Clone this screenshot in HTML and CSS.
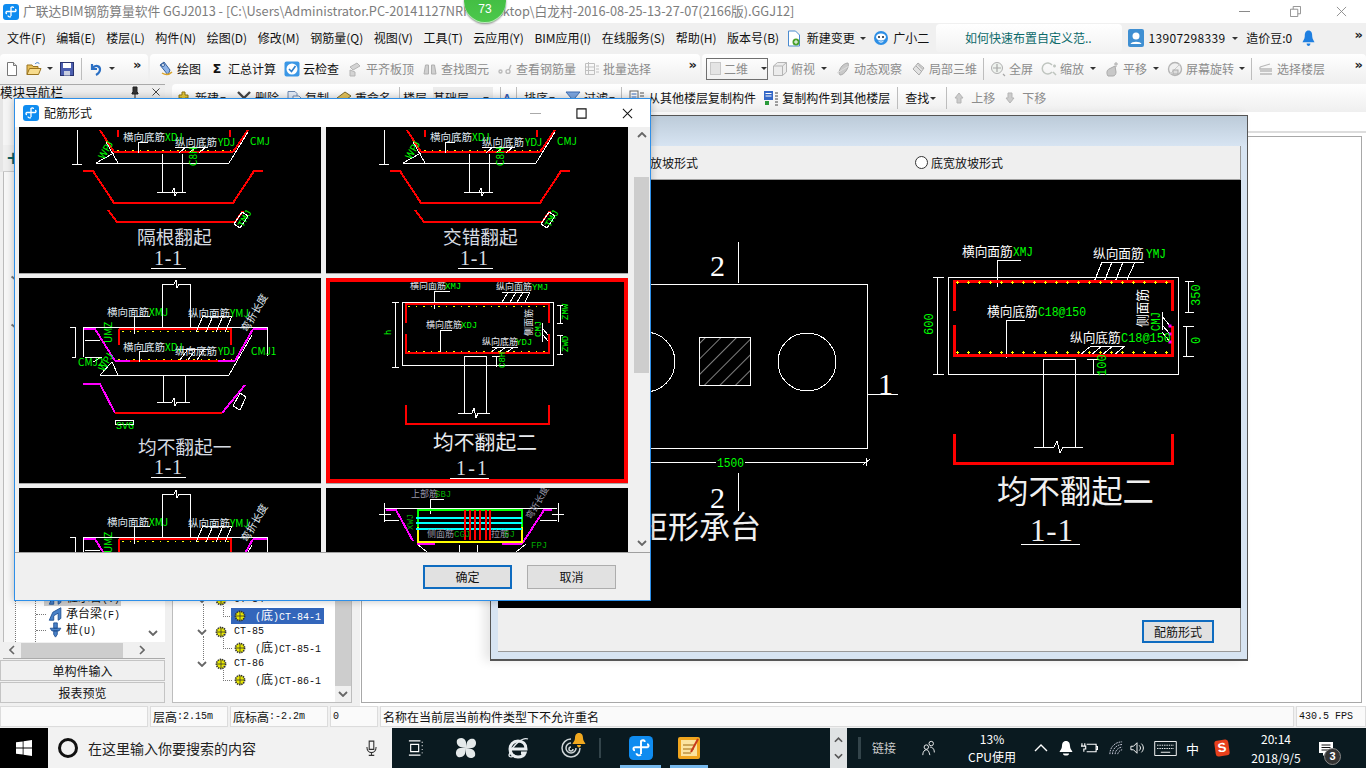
FILE: index.html
```html
<!DOCTYPE html>
<html lang="zh-CN">
<head>
<meta charset="utf-8">
<title>广联达BIM钢筋算量软件</title>
<link rel="stylesheet" href="styles.css">
</head>
<body>
<svg class="defs" width="0" height="0">
  <defs>
    <symbol id="i-logo" viewBox="0 0 16 16"><rect width="16" height="16" rx="3" fill="#0f8cf0"/><path d="M8 3v9M3.5 7.5h9M8 12.5c-1.5 1-3 0-3-1M8 3.5c1-1 2.500-.8 2.500.5M12.500 7.500c.8-.8.8-2-.5-2M3.500 7.500c-.8.8-.8 2 .5 2" fill="none" stroke="#fff" stroke-width="1.300"/></symbol>
    <symbol id="i-new" viewBox="0 0 16 16"><path d="M3.500 1.500h6l3 3v10h-9z" fill="#fff" stroke="#777"/><path d="M9.500 1.500v3h3" fill="#ddd" stroke="#777"/></symbol>
    <symbol id="i-open" viewBox="0 0 16 16"><path d="M1 4h5l1 1.500h5v8H1z" fill="#e8bf5a" stroke="#9a7420"/><path d="M3.500 7.500H15L12.500 13.500H1z" fill="#f7dc8e" stroke="#9a7420"/><path d="M9 3c2-2 3.500-1.500 4.500 0" fill="none" stroke="#3a7bc8"/></symbol>
    <symbol id="i-save" viewBox="0 0 16 16"><rect x="1.500" y="1.500" width="13" height="13" fill="#4c5fb0" stroke="#28336f"/><rect x="4" y="2" width="8" height="5" fill="#fff"/><rect x="5" y="10" width="6" height="4.500" fill="#c9cfe0"/></symbol>
    <symbol id="i-undo" viewBox="0 0 16 16"><path d="M4 3v5h5M4.500 7.500C7 3.500 12.500 4.500 12 9c-.3 2.500-2 4-4 5" fill="none" stroke="#2a6fc4" stroke-width="2.200"/></symbol>
    <symbol id="i-draw" viewBox="0 0 16 16"><path d="M2 4l4-3 6 8-2 5z" fill="#8fb4e8" stroke="#35609c"/><path d="M4 12c3 2 7 2 10-1" fill="none" stroke="#d9a227" stroke-width="1.500"/><circle cx="5" cy="4" r="1.500" fill="#fff" stroke="#35609c"/></symbol>
    <symbol id="i-cloud" viewBox="0 0 16 16"><rect x=".5" y=".5" width="15" height="15" rx="2" fill="#3a97e6"/><circle cx="8" cy="8" r="5.500" fill="#fff"/><path d="M5 8l2.500 2.500L11.500 5" fill="none" stroke="#2a7dca" stroke-width="1.600"/></symbol>
    <symbol id="i-flush" viewBox="0 0 16 16"><path d="M3 6l7-4 3 3-7 4zM3 9l5 2v4H3z" fill="#d4d4d4" stroke="#b5b5b5"/></symbol>
    <symbol id="i-bino" viewBox="0 0 16 16"><path d="M2 13l1.500-9h3v9zM9.500 13V4h3l1.500 9z" fill="#d0d0d0" stroke="#b0b0b0"/></symbol>
    <symbol id="i-glass" viewBox="0 0 16 16"><path d="M2 10.500c0-2 3-2 3 0s-3 2-3 0zM9 10.500c0-2.500 4-2.500 4 0s-4 2.500-4 0zM12 9l2-5" fill="none" stroke="#bbb" stroke-width="1.400"/></symbol>
    <symbol id="i-batch" viewBox="0 0 16 16"><path d="M1.500 2.500h9v11h-9zM4.500 1v13M1.500 6h9M1.500 9.500h9M12 5h3M12 8h3M12 11h3" fill="none" stroke="#c0c0c0"/></symbol>
    <symbol id="i-cube" viewBox="0 0 16 16"><path d="M1.500 5l4-3.500h9V11l-4 3.500h-9zM1.500 5h9v9.500M10.500 5l4-3.500" fill="#ececec" stroke="#b5b5b5"/></symbol>
    <symbol id="i-orbit" viewBox="0 0 16 16"><path d="M5 14C2 11 7 2 13 2c2 3-3 12-8 12z" fill="#c9c9c9" stroke="#aaa"/><path d="M2 12L14 5" stroke="#ddd"/></symbol>
    <symbol id="i-local" viewBox="0 0 16 16"><path d="M3 8l5-6 6 5-5 7zM6 5l5 5M8 3.500L12.500 8" fill="#e2e2e2" stroke="#aaa"/></symbol>
    <symbol id="i-full" viewBox="0 0 16 16"><circle cx="7" cy="7" r="5.500" fill="#eef2ee" stroke="#b0b0b0"/><path d="M7 3v8M3 7h8M13 13l2 2" stroke="#a8a8a8" fill="none" stroke-width="1.200"/></symbol>
    <symbol id="i-zoom" viewBox="0 0 16 16"><path d="M11 4A5.500 5.500 0 1 0 11 11M12 11l3 3M12 5h3M13.500 3.500v3" fill="none" stroke="#bfc5bf" stroke-width="1.500"/></symbol>
    <symbol id="i-pan" viewBox="0 0 16 16"><path d="M4 15c-2-3-1-6 1-7l6-3 1 6c0 2-1 4-3 4z" fill="#c8c8c8" stroke="#aaa"/><path d="M12 1v5M10 3h4" stroke="#aaa" fill="none"/></symbol>
    <symbol id="i-rotate" viewBox="0 0 16 16"><circle cx="8" cy="8" r="6.500" fill="#f0f0f0" stroke="#b5b5b5" stroke-width="1.400"/><path d="M3 13L13 3" stroke="#ccc"/><rect x="6" y="9" width="5" height="4" fill="#ddd" stroke="#aaa"/></symbol>
    <symbol id="i-floor" viewBox="0 0 16 16"><path d="M2 6l10-3M2 6v2h12M2 10h12M2 13h12" fill="none" stroke="#b9b9b9" stroke-width="1.300"/></symbol>
    <symbol id="i-add" viewBox="0 0 16 16"><path d="M3 5h3V2h3v3h3v3H9v3H6V8H3z" fill="#e6c83a" stroke="#8a7411"/><rect x="6" y="11" width="9" height="2" fill="#3a6fc4"/></symbol>
    <symbol id="i-del" viewBox="0 0 16 16"><path d="M2 2l12 12M14 2L2 14" stroke="#444" stroke-width="2.400"/></symbol>
    <symbol id="i-copy" viewBox="0 0 16 16"><path d="M2 1.500h7l2 2v9H2z" fill="#e5ecf7" stroke="#6f88ae"/><path d="M7 6h6l2 2v7H7z" fill="#fff" stroke="#6f88ae"/></symbol>
    <symbol id="i-rename" viewBox="0 0 16 16"><path d="M1 8l8-6 6 4-8 6z" fill="#e4c25a" stroke="#7a6a2a"/><path d="M4 13h10" stroke="#8a8a8a" stroke-width="1.500"/></symbol>
    <symbol id="i-filter" viewBox="0 0 16 16"><path d="M1 2h14L9.500 8.500V14l-3-2V8.500z" fill="#7da6e0" stroke="#3e6db0"/></symbol>
    <symbol id="i-from" viewBox="0 0 16 16"><rect x="1" y="1" width="8" height="13" fill="#fff" stroke="#666"/><path d="M2.500 4h5M2.500 7h5M2.500 10h5" stroke="#3468b8"/><path d="M11 3h4M11 6h4M11 9h4M11 12h4" stroke="#555"/></symbol>
    <symbol id="i-to" viewBox="0 0 16 16"><rect x="1" y="1" width="9" height="9" fill="#3468c8"/><path d="M2.500 3.500h6M2.500 6h6" stroke="#fff"/><rect x="2" y="11" width="4" height="4" fill="#2a9a3a"/><path d="M12 3h3M12 6h3M12 9h3M12 12h3M12 15h3" stroke="#444"/></symbol>
    <symbol id="i-up" viewBox="0 0 10 12"><path d="M5 1l4 5H7v5H3V6H1z" fill="#ccc" stroke="#b5b5b5"/></symbol>
    <symbol id="i-down" viewBox="0 0 10 12"><path d="M5 11L1 6h2V1h4v5h2z" fill="#ccc" stroke="#b5b5b5"/></symbol>
    <symbol id="i-doc" viewBox="0 0 14 17"><path d="M1.500 1h7l4 4v11h-11z" fill="#fff" stroke="#4a8bd0"/><circle cx="9" cy="12" r="3.500" fill="#4aa02c"/><path d="M7 12h4M9 10v4" stroke="#fff"/></symbol>
    <symbol id="i-bot" viewBox="0 0 16 16"><circle cx="8" cy="8" r="7" fill="#2d8fe6"/><ellipse cx="8" cy="7" rx="5" ry="3.500" fill="#fff"/><circle cx="6" cy="7" r="1" fill="#123"/><circle cx="10" cy="7" r="1" fill="#123"/><path d="M5.500 11c1.500 1.500 3.500 1.500 5 0" stroke="#fff" fill="none"/></symbol>
    <symbol id="i-user" viewBox="0 0 16 18"><rect width="16" height="18" rx="2" fill="#3f8fd2"/><circle cx="8" cy="7" r="3.500" fill="#fff"/><path d="M2.500 15c1-3 10-3 11 0z" fill="#fff"/></symbol>
    <symbol id="i-bell" viewBox="0 0 14 18"><path d="M7 1c3 0 4 2.500 4 6 0 3 2 5 2.500 6.500H.500C1 12 3 10 3 7c0-3.500 1-6 4-6z" fill="#1f7fe0"/><path d="M5 15h4c0 1.500-.8 2.500-2 2.500S5 16.500 5 15z" fill="#1f7fe0"/></symbol>
    <symbol id="i-gear" viewBox="0 0 12 12"><circle cx="6" cy="6" r="4.600" fill="#e8e800" stroke="#333" stroke-dasharray="1.400 .8" stroke-width="1.600"/><path d="M1.500 6h9M6 1.500v9" stroke="#333" stroke-width=".8"/></symbol>
    <symbol id="i-beam" viewBox="0 0 16 18"><path d="M1 16l4-9 9-5v12l-3 2V8L6 11v5z" fill="#4a82c8" stroke="#1e4f90"/></symbol>
    <symbol id="i-pile" viewBox="0 0 14 18"><path d="M1 7h12l-2 3H3zM5 1h4v6H5zM5 10h4v4l-2 3-2-3z" fill="#4a82c8" stroke="#1e4f90"/></symbol>
    <symbol id="i-chev" viewBox="0 0 10 6"><path d="M1 1l4 4 4-4" fill="none" stroke="#666" stroke-width="1.800"/></symbol>

    <symbol id="trap" viewBox="0 0 1366 768" overflow="visible">
      <path d="M162 327V284H174l2-4 1 8 2-4H190V327M83 327H267M83 327V357M267 327V356M100 375H229L252 335M100 375L112 362L118 375" class="w" />
      <path d="M119 329H231V345M119 329V345" class="r"/>
      <path d="M122 331H229M118 359H232" class="ds"/>
      <path d="M84 329H95L115 361M253 329H267M253 329L235 361" class="m"/>
      <path d="M115 361H235" class="r"/>
      <path d="M115 361H130M218 361H235" class="m"/>
      <path d="M134 316H150M134 316V334M203 316H232M203 316L196 332M213 316L206 332M223 316L216 332M232 316L225 332" class="w"/>
      <path d="M139 351V362M139 351H148M188 349L180 360M210 349H178M196 349L188 360M204 349L197 360M75 327V357H72M75 327H70M85 340H100M85 357H102L93 362" class="w"/>
      <text x="107" y="316" class="tw">横向面筋</text><text x="149" y="316" class="tg">XMJ</text>
      <text x="188" y="317" class="tw">纵向面筋</text><text x="230" y="317" class="tg">YMJ</text>
      <text x="123" y="351" class="tw">横向底筋</text><text x="165" y="351" class="tg">XDJ</text>
      <text x="175" y="355" class="tw">纵向底筋</text><text x="218" y="355" class="tg">YDJ</text>
      <text x="78" y="366" class="tg">CMJ2</text><text x="251" y="355" class="tg">CMJ1</text>
      <text transform="translate(112 343) rotate(-90)" class="tg">UMZ</text>
      <text transform="translate(104 372) rotate(-60)" class="tg">WPJ</text>
      <text transform="translate(247 333) rotate(-60)" class="tw">弯折长度</text>
    </symbol>

    <symbol id="topc" viewBox="0 0 1366 768" overflow="visible">
      <path d="M114 152H233M100 130L114 152M233 152L248 130M118 130V137M230 130V137" class="r"/>
      <path d="M117 150H231" class="ds"/>
      <path d="M77 130V164M72 164H82M96 163H229L248 132M114 153L96 163M162 154V192H182V154M157 192H172l2-4 1 8 2-4H186M138 153V142H148M175 147H208M186 147L179 153M196 147L189 153M206 147L199 153M106 142L118 163" class="w"/>
      <text x="123" y="141" class="tw">横向底筋</text><text x="165" y="141" class="tg">XDJ</text>
      <text x="175" y="146" class="tw">纵向底筋</text><text x="218" y="146" class="tg">YDJ</text>
      <text x="250" y="145" class="tg">CMJ</text>
      <text transform="translate(104 160) rotate(-60)" class="tg">WPJ</text>
      <text transform="translate(197 166) rotate(-90)" class="tg">C8H</text>
    </symbol>
  </defs>
</svg>

<div class="app">
  <header class="titlebar">
    <svg class="ico16"><use href="#i-logo"/></svg>
    <span class="title-text">广联达BIM钢筋算量软件 GGJ2013 - [C:\Users\Administrator.PC-20141127NRHI\Desktop\白龙村-2016-08-25-13-27-07(2166版).GGJ12]</span>
    <div class="win-btns">
      <span class="wb-min"></span>
      <svg class="wb wb-max" viewBox="0 0 12 12"><path d="M.5 3.500h8v8h-8zM3.500 3.500v-3h8v8h-3" fill="none" stroke="#8a8a8a"/></svg>
      <svg class="wb" viewBox="0 0 12 12"><path d="M1 1l10 10M11 1L1 11" stroke="#8a8a8a"/></svg>
    </div>
  </header>

  <nav class="menubar">
    <span>文件(F)</span><span>编辑(E)</span><span>楼层(L)</span><span>构件(N)</span><span>绘图(D)</span><span>修改(M)</span><span>钢筋量(Q)</span><span>视图(V)</span><span>工具(T)</span><span>云应用(Y)</span><span>BIM应用(I)</span><span>在线服务(S)</span><span>帮助(H)</span><span>版本号(B)</span>
    <span class="menu-ti menu-doc"><svg class="ico-doc"><use href="#i-doc"/></svg>新建变更<i class="caret"></i></span>
    <span class="menu-ti menu-bot"><svg class="ico16"><use href="#i-bot"/></svg>广小二</span>
    <span class="menu-tip">如何快速布置自定义范..</span>
    <span class="menu-ti menu-user"><svg class="ico-user"><use href="#i-user"/></svg><span class="phone">13907298339</span><i class="caret"></i></span>
    <span class="menu-bean">造价豆:0</span>
    <svg class="ico-bell"><use href="#i-bell"/></svg>
    <b class="more more-end">»</b>
  </nav>

  <div class="toolbar">
    <div class="tb-seg seg-a">
      <svg class="ico16"><use href="#i-new"/></svg>
      <svg class="ico16"><use href="#i-open"/></svg><i class="caret"></i>
      <svg class="ico16"><use href="#i-save"/></svg>
      <i class="sep"></i>
      <svg class="ico16"><use href="#i-undo"/></svg><i class="caret"></i>
      <b class="more">»</b>
    </div>
    <div class="tb-seg seg-b">
      <span class="ti"><svg class="ico16"><use href="#i-draw"/></svg>绘图</span>
      <span class="ti"><span class="ico16 sigma">Σ</span>汇总计算</span>
      <span class="ti"><svg class="ico16"><use href="#i-cloud"/></svg>云检查</span>
      <span class="ti off"><svg class="ico16"><use href="#i-flush"/></svg>平齐板顶</span>
      <span class="ti off"><svg class="ico16"><use href="#i-bino"/></svg>查找图元</span>
      <span class="ti off"><svg class="ico16"><use href="#i-glass"/></svg>查看钢筋量</span>
      <span class="ti off"><svg class="ico16"><use href="#i-batch"/></svg>批量选择</span>
      <b class="more more-end">»</b>
    </div>
    <div class="tb-seg seg-c">
      <span class="combo off"><i class="swatch"></i>二维<i class="caret"></i></span>
      <span class="ti off"><svg class="ico16"><use href="#i-cube"/></svg>俯视<i class="caret"></i></span>
      <span class="ti off"><svg class="ico16"><use href="#i-orbit"/></svg>动态观察</span>
      <span class="ti off"><svg class="ico16"><use href="#i-local"/></svg>局部三维</span>
      <i class="sep"></i>
      <span class="ti off"><svg class="ico16"><use href="#i-full"/></svg>全屏</span>
      <span class="ti off"><svg class="ico16"><use href="#i-zoom"/></svg>缩放<i class="caret"></i></span>
      <span class="ti off"><svg class="ico16"><use href="#i-pan"/></svg>平移<i class="caret"></i></span>
      <span class="ti off"><svg class="ico16"><use href="#i-rotate"/></svg>屏幕旋转<i class="caret caret-near"></i></span>
      <i class="sep"></i>
      <span class="ti off"><svg class="ico16"><use href="#i-floor"/></svg>选择楼层</span>
      <b class="more more-end">»</b>
    </div>
  </div>

  <div class="workspace">
    <aside class="nav">
      <div class="nav-head"><span>模块导航栏</span>
        <svg class="nav-pin" viewBox="0 0 8 12"><path d="M2 1h4v5l1 1v1H1V7l1-1zM4 8v4" fill="#333" stroke="#222"/></svg>
        <svg class="nav-x" viewBox="0 0 8 8"><path d="M.5.5l7 7M7.500.5l-7 7" stroke="#444"/></svg>
      </div>
      <div class="nav-tools"><span class="nav-plus">+</span></div>
      <div class="nav-list">
        <i class="mark mark-a"></i><i class="mark mark-b"></i>
        <div class="nav-item nav-cur"><svg class="ico-beam"><use href="#i-beam"/></svg><span>桩承台<span class="m">(V)</span></span></div>
        <div class="nav-item"><svg class="ico-beam"><use href="#i-beam"/></svg><span>承台梁<span class="m">(F)</span></span></div>
        <div class="nav-item"><svg class="ico-beam"><use href="#i-pile"/></svg><span>桩<span class="m">(U)</span></span></div>
        <svg class="nav-chev"><use href="#i-chev"/></svg>
      </div>
      <div class="nav-hscroll">
        <svg class="hs-arrow" viewBox="0 0 6 10"><path d="M5 1L1 5l4 4" fill="none" stroke="#666" stroke-width="1.600"/></svg>
        <i class="hs-thumb"></i>
        <svg class="hs-arrow" viewBox="0 0 6 10"><path d="M1 1l4 4-4 4" fill="none" stroke="#666" stroke-width="1.600"/></svg>
      </div>
      <div class="nav-btn">单构件输入</div>
      <div class="nav-btn">报表预览</div>
    </aside>

    <section class="content">
      <div class="rowbar">
        <span class="ti"><svg class="ico16"><use href="#i-add"/></svg>新建<i class="caret"></i></span>
        <span class="ti"><svg class="ico16"><use href="#i-del"/></svg>删除</span>
        <span class="ti"><svg class="ico16"><use href="#i-copy"/></svg>复制</span>
        <span class="ti"><svg class="ico16"><use href="#i-rename"/></svg>重命名</span>
        <i class="sep sep-a"></i><span class="ti">楼层</span>
        <span class="ti floorsel">基础层<i class="caret"></i></span>
        <i class="sep sep-b"></i><b class="az">A</b><i class="sep sep-c"></i>
        <span class="ti">排序<i class="caret"></i></span>
        <span class="ti"><svg class="ico16"><use href="#i-filter"/></svg>过滤<i class="caret"></i></span>
        <i class="sep sep-d"></i>
        <span class="ti"><svg class="ico16"><use href="#i-from"/></svg>从其他楼层复制构件</span>
        <span class="ti"><svg class="ico16"><use href="#i-to"/></svg>复制构件到其他楼层</span>
        <i class="sep"></i><span class="ti">查找<i class="caret"></i></span><i class="sep"></i>
        <span class="ti off"><svg class="ico-arrow"><use href="#i-up"/></svg>上移</span>
        <span class="ti off"><svg class="ico-arrow"><use href="#i-down"/></svg>下移</span>
      </div>
      <div class="content-body">
        <div class="tree">
          <div class="tree-rows">
            <div class="tr"><svg class="tr-chev"><use href="#i-chev"/></svg><svg class="ico12"><use href="#i-gear"/></svg><span class="m">CT-84</span></div>
            <div class="tr tr-c tr-v tr-sel"><svg class="ico12"><use href="#i-gear"/></svg><span><span class="m">(</span>底<span class="m">)CT-84-1</span></span></div>
            <div class="tr"><svg class="tr-chev"><use href="#i-chev"/></svg><svg class="ico12"><use href="#i-gear"/></svg><span class="m">CT-85</span></div>
            <div class="tr tr-c tr-v"><svg class="ico12"><use href="#i-gear"/></svg><span><span class="m">(</span>底<span class="m">)CT-85-1</span></span></div>
            <div class="tr"><svg class="tr-chev"><use href="#i-chev"/></svg><svg class="ico12"><use href="#i-gear"/></svg><span class="m">CT-86</span></div>
            <div class="tr tr-c"><svg class="ico12"><use href="#i-gear"/></svg><span><span class="m">(</span>底<span class="m">)CT-86-1</span></span></div>
          </div>
          <div class="tree-scroll"><i></i><svg class="nav-chev-s"><use href="#i-chev"/></svg></div>
        </div>
        <div class="canvas-wrap">
          <div class="tab-strip"></div>
          <div class="canvas"></div>
        </div>
      </div>
    </section>
  </div>

  <footer class="status">
    <span class="st st1"></span>
    <span class="st st2">层高<span class="m">:2.15m</span></span>
    <span class="st st3">底标高<span class="m">:-2.2m</span></span>
    <span class="st st4"><span class="m">0</span></span>
    <span class="st st5">名称在当前层当前构件类型下不允许重名</span>
    <span class="st st6"><span class="m">430.5 FPS</span></span>
  </footer>

  <div class="taskbar">
    <div class="tk-start"><svg class="tk-win" viewBox="0 0 16 16"><path d="M0 2.300L6.700 1.400V7.600H0zM7.500 1.300L16 0V7.600H7.500zM0 8.400H6.700V14.600L0 13.700zM7.500 8.400H16V16L7.500 14.700z" fill="#fff"/></svg></div>
    <div class="tk-search">
      <i class="cortana"></i><span>在这里输入你要搜索的内容</span>
      <svg class="tk-mic" viewBox="0 0 12 18"><path d="M3.500 1.500h5v9h-5zM1 8c0 8 10 8 10 0M6 14v3M3 17h6" fill="none" stroke="#333" stroke-width="1.200"/></svg>
    </div>
    <div class="tk-apps">
      <svg class="tk-ico tk-view" viewBox="0 0 18 18"><path d="M1 1h13M1 17h13M3 5h9v8H3zM16 2v1M16 6v1M16 10v1M16 14v1" fill="none" stroke="#fff" stroke-width="1.300"/></svg>
      <svg class="tk-ico tk-fan" viewBox="0 0 24 24"><path d="M12 12C4 12 2 8 3 4c2-3 8-3 9 2zM12 12c0-8 4-10 8-9 3 2 3 8-2 9zM12 12c8 0 10 4 9 8-2 3-8 3-9-2zM12 12c0 8-4 10-8 9-3-2-3-8 2-9z" fill="#e4e9ea"/></svg>
      <svg class="tk-ico tk-ie" viewBox="0 0 24 24"><path d="M5 13h15c0-5-3-8-8-8s-8 4-8 8 3 8 8 8c3 0 6-1 7-4h-4" fill="none" stroke="#e8edf0" stroke-width="3"/><path d="M22 3c-5-2-15 5-19 16 0 3 4 2 6 0" fill="none" stroke="#e8edf0" stroke-width="1.300"/></svg>
      <span class="tk-swirl">
        <svg viewBox="0 0 24 24" class="tk-ico"><path d="M12 3a9 9 0 1 0 9 9M12 7a5 5 0 1 0 5 5M12 11a2 2 0 1 0 2 2" fill="none" stroke="#cfd6d8" stroke-width="1.500"/></svg>
        <svg viewBox="0 0 14 16" class="tk-bellbadge"><path d="M7 1c3 0 4 2.500 4 5 0 3 2 4 2.500 6H.500C1 10 3 9 3 6c0-2.500 1-5 4-5zM5 13h4c0 1.500-1 2.500-2 2.500S5 14.500 5 13z" fill="#f0a81f"/></svg>
      </span>
      <i class="tk-sep"></i>
      <span class="tk-slot tk-act"><svg class="tk-ico tk-big"><use href="#i-logo"/></svg></span>
      <span class="tk-slot tk-act2"><svg class="tk-ico tk-big" viewBox="0 0 24 24"><rect x="1" y="1" width="22" height="22" rx="2" fill="#f0a51e"/><rect x="4" y="4" width="16" height="16" fill="#fbe3a0"/><path d="M6 9h11M6 13h11M6 17h8" stroke="#a06a10"/><path d="M14 16L21 3" stroke="#c83a1a" stroke-width="2"/></svg></span>
    </div>
    <div class="tk-scroll">
      <svg viewBox="0 0 10 6"><path d="M1 5l4-4 4 4" fill="none" stroke="#555" stroke-width="1.800"/></svg>
      <svg viewBox="0 0 10 6"><path d="M1 1l4 4 4-4" fill="none" stroke="#555" stroke-width="1.800"/></svg>
    </div>
    <div class="tk-tray">
      <i class="tk-sep tk-sep2"></i>
      <span class="tk-link">链接</span>
      <svg class="tk-people" viewBox="0 0 18 18"><circle cx="11.500" cy="4" r="2.500" fill="none" stroke="#fff"/><circle cx="6" cy="8" r="2.500" fill="none" stroke="#fff"/><path d="M2 17c0-4 2-6 4-6s3 2 4 6M10 8c2 0 5 1 5 6" fill="none" stroke="#fff"/></svg>
      <span class="tk-cpu"><span>13%</span><span>CPU使用</span></span>
      <svg class="tk-t tk-up" viewBox="0 0 14 10"><path d="M1 8l6-6 6 6" fill="none" stroke="#fff" stroke-width="1.400"/></svg>
      <svg class="tk-t" viewBox="0 0 14 16"><path d="M7 1c3 0 4 2.500 4 5 0 3 2 4 2.500 6H.500C1 10 3 9 3 6c0-2.500 1-5 4-5zM4 13.500h6c0 1.500-1 2-3 2s-3-.5-3-2z" fill="#fff"/></svg>
      <svg class="tk-t tk-wide" viewBox="0 0 18 14"><path d="M6 3h10v8H6M16 5.500h1.500v3H16M1 2v3M4 2v3M0 5h5v3H3v3" fill="none" stroke="#fff" stroke-width="1.200"/></svg>
      <svg class="tk-t" viewBox="0 0 16 16"><path d="M1 15c0-8 6-14 14-14M4 15c0-6 5-11 11-11M7 15c0-4 4-8 8-8M10 15c0-2 3-5 5-5" fill="none" stroke="#dde" stroke-dasharray="2 1"/></svg>
      <svg class="tk-t tk-vol" viewBox="0 0 16 16"><path d="M1 6h3l4-4v12l-4-4H1zM10.500 5c2 2 2 4 0 6M13 3c3 3 3 7 0 10" fill="none" stroke="#fff" stroke-width="1.100"/></svg>
      <svg class="tk-t tk-kb" viewBox="0 0 24 16"><path d="M.500.500h23v15H.500z" fill="none" stroke="#fff"/><path d="M3 4.500h18M3 8h18" stroke="#fff" stroke-dasharray="1.500 1"/><path d="M7 12h10" stroke="#fff"/></svg>
      <span class="tk-ime">中</span>
      <span class="tk-sogou">S</span>
      <span class="tk-clock"><span>20:14</span><span>2018/9/5</span></span>
      <span class="tk-notify">
        <svg viewBox="0 0 16 16"><path d="M1 1h14v11H8l-3 3v-3H1z" fill="#fff"/><path d="M3.500 4h9M3.500 6.500h9M3.500 9h9" stroke="#111"/></svg>
        <b>3</b>
      </span>
    </div>
  </div>
</div>

<div class="badge"><span>73</span></div>

<!-- 背后的对话框 -->
<div class="dlg-back">
  <div class="back-band"></div>
  <div class="back-panel">
    <div class="back-radio">
      <label class="rd-left">全部放坡形式</label>
      <label class="rd-right"><i class="radio"></i>底宽放坡形式</label>
    </div>
    <svg class="cad" viewBox="498 180 743 428" width="743" height="428">
      <defs><pattern id="hatch" width="11" height="11" patternUnits="userSpaceOnUse" patternTransform="rotate(-45)"><path d="M0 0H11" stroke="#fff"/></pattern></defs>
      <g class="w">
        <path d="M560 284H867V448H560Z"/>
        <circle cx="645" cy="362" r="30"/><circle cx="807" cy="362" r="29"/>
        <rect x="699" y="337" width="51" height="48" fill="url(#hatch)"/>
        <path d="M738 242V283M738 473V511M867 394H898M600 462H866M866 458V466M863 465L870 459"/>
        <path d="M948 277H1178V374H948ZM937 277V374M933 277H944M933 374H944"/>
        <path d="M1185 281H1194M1188 281V312M1185 312H1194M1183 326H1194M1186 326V356M1183 356H1194"/>
        <path d="M997 287V260H1021M1101 262H1144M1102 262L1094 282M1112 262L1104 282M1123 262L1115 282M1135 262L1126 282"/>
        <path d="M1006 358V320H1025M1091 346H1125M1091 346L1080 355M1102 346L1091 355M1113 346L1102 355M1125 346L1114 355"/>
        <path d="M1162 312V330M1162 316L1170 326M1162 325L1170 334M1162 332L1170 342M1093 359V375M1087 359H1099"/>
        <path d="M1043 374V359H1075V447M1043 374V447M1034 447H1054L1057 441L1060 453L1063 447H1083"/>
      </g>
      <path d="M954 311V281H1172V311M954 325V355H1172V326" class="r big"/>
      <path d="M954 434V463H1172V434" class="r big"/>
      <path d="M955.500 282.500H1171M955.500 352.500H1171" class="dh"/>
      <path d="M956.500 282.500H1171M956.500 352.500H1171" class="dv"/>
      <path d="M1170 326h.01M1170 334h.01M1170 342h.01" class="dots-m"/>
      <rect x="716" y="455" width="29" height="14" fill="#000"/>
      <text x="717" y="467" class="big-g12" textLength="27" lengthAdjust="spacingAndGlyphs">1500</text>
      <text x="710" y="276" class="big-num">2</text>
      <text x="710" y="508" class="big-num">2</text>
      <text x="878" y="394" class="big-num">1</text>
      <text x="637" y="538" class="big-t">矩形承台</text>
      <text x="962" y="256" class="big-w">横向面筋</text><text x="1013" y="256" class="big-g" textLength="20" lengthAdjust="spacingAndGlyphs">XMJ</text>
      <text x="1093" y="258" class="big-w">纵向面筋</text><text x="1146" y="258" class="big-g" textLength="20" lengthAdjust="spacingAndGlyphs">YMJ</text>
      <text x="987" y="316" class="big-w">横向底筋</text><text x="1038" y="316" class="big-g" textLength="48" lengthAdjust="spacingAndGlyphs">C18@150</text>
      <text x="1070" y="342" class="big-w">纵向底筋</text><text x="1121" y="342" class="big-g" textLength="50" lengthAdjust="spacingAndGlyphs">C18@150</text>
      <text transform="translate(1147 327) rotate(-90)" class="big-w">侧面筋</text>
      <text transform="translate(1160 331) rotate(-90)" class="big-g" textLength="19" lengthAdjust="spacingAndGlyphs">CMJ</text>
      <text transform="translate(933 335) rotate(-90)" class="big-g13">600</text>
      <text transform="translate(1200 306) rotate(-90)" class="big-g13">350</text>
      <text transform="translate(1200 344) rotate(-90)" class="big-g13">0</text>
      <text transform="translate(1106 376) rotate(-90)" class="big-g13">100</text>
      <text x="997" y="503" class="big-t big-t2">均不翻起二</text>
      <text x="1030" y="541" class="big-t big-n" textLength="43">1-1</text>
      <path d="M1021 544H1080" class="w"/>
    </svg>
    <div class="back-foot"><button class="btn btn-blue btn-rebar">配筋形式</button></div>
  </div>
</div>

<!-- 前面的对话框 -->
<div class="dlg">
  <div class="dlg-title">
    <svg class="ico16"><use href="#i-logo"/></svg><span>配筋形式</span>
    <div class="dlg-ctrl">
      <i class="dc-min"></i>
      <svg viewBox="0 0 12 12"><path d="M1 1h10v10H1z" fill="none" stroke="#111" stroke-width="1.200"/></svg>
      <svg viewBox="0 0 12 12"><path d="M1 1l10 10M11 1L1 11" stroke="#111" stroke-width="1.100"/></svg>
    </div>
  </div>
  <div class="dlg-body">
    <div class="thumbs">
      <div class="grid">
        <svg class="cell" viewBox="19 68 302 205">
          <use href="#topc" width="1366" height="768"/>
          <path d="M83 171H93L114 203H233L254 171H263M108 210L117 222H235L243 211" class="r"/>
          <path d="M242 212L248 216L240 228L234 224Z" class="w"/>
          <text transform="translate(243 228) rotate(-60)" class="tg">TMJ</text>
          <text x="137" y="244" class="ttl">隔根翻起</text><text x="154" y="265" class="ttl ttl-n" textLength="28">1-1</text><path d="M151 268H186" class="w"/>
        </svg>
        <svg class="cell" viewBox="327 68 302 205">
          <use href="#topc" width="1366" height="768" transform="translate(308 0)"/>
          <path d="M391 171H401L422 203H541L562 171H571M416 210L425 222H543L551 211" class="r"/>
          <path d="M550 212L556 216L548 228L542 224Z" class="w"/>
          <text transform="translate(551 228) rotate(-60)" class="tg">TMJ</text>
          <text x="444" y="244" class="ttl">交错翻起</text><text x="461" y="265" class="ttl ttl-n" textLength="28">1-1</text><path d="M459 268H494" class="w"/>
        </svg>
        <svg class="cell" viewBox="19 278 302 205">
          <use href="#trap" width="1366" height="768"/>
          <path d="M163 375V402M185 375V402M157 402H172l2-4 1 8 2-4H190" class="w"/>
          <path d="M83 384H100L115 413M222 413L245 385" class="m"/>
          <path d="M115 413H222" class="r"/>
          <path d="M240 393L246 397L240 410L233 406ZM115 420H133V424H115Z" class="w"/>
          <text x="116" y="429" class="tg">SVG</text>
          <text x="138" y="454" class="ttl">均不翻起一</text><text x="154" y="474" class="ttl ttl-n" textLength="28">1-1</text><path d="M151 477H186" class="w"/>
        </svg>
        <svg class="cell cell-sel" viewBox="326 278 302 205">
          <path d="M402 302H553V365H402ZM395 302V367M392 302H399M392 367H399M434 309V291H450M502 292H530M508 292L501 304M516 292L509 304M523 292L516 304M530 292L524 304M440 354V330H452M492 347H518M498 347L490 353M506 347L498 353M514 347L506 353M542 323V342M542 328L549 336M542 334L549 342M557 305H563M560 305V323M557 323H563M557 335H563M560 335V354M557 354H563M496 356V367M492 356H500M464 365V356H486V413M464 365V413M458 413H472L474 408L476 418L478 413H490" class="w"/>
          <path d="M406 323V304H549V323M406 334V353H549V334M406 405V424H549V405" class="r"/>
          <path d="M408 306H547M408 351H547" class="ds"/>
          <text x="410" y="289" class="ts">横向面筋</text><text x="445" y="289" class="ts-g">XMJ</text>
          <text x="496" y="290" class="ts">纵向面筋</text><text x="532" y="290" class="ts-g">YMJ</text>
          <text x="426" y="328" class="ts">横向底筋</text><text x="461" y="328" class="ts-g">XDJ</text>
          <text x="482" y="345" class="ts">纵向底筋</text><text x="516" y="345" class="ts-g">YDJ</text>
          <text transform="translate(532 336) rotate(-90)" class="ts">侧面筋</text>
          <text transform="translate(541 337) rotate(-90)" class="ts-g">CMJ</text>
          <text transform="translate(391 335) rotate(-90)" class="ts-g">h</text>
          <text transform="translate(568 320) rotate(-90)" class="ts-g">ZMW</text>
          <text transform="translate(568 352) rotate(-90)" class="ts-g">ZWD</text>
          <text transform="translate(505 368) rotate(-90)" class="ts-g">C8H</text>
          <text x="433" y="450" class="ttl ttl-b">均不翻起二</text><text x="456" y="475" class="ttl ttl-n" textLength="31">1-1</text><path d="M450 478H489" class="w"/>
        </svg>
        <svg class="cell" viewBox="19 488 302 205">
          <use href="#trap" width="1366" height="768" y="210"/>
        </svg>
        <svg class="cell" viewBox="327 488 302 205">
          <path d="M386 508H558M385 503V522M559 503V522M380 514H392M553 514H565M431 514V499H445M386 520H400M541 520H558M460 545V552M478 545V552M418 544L428 552M527 544L517 552" class="w"/>
          <path d="M387 510H397L414 541M553 510H545L523 544M418 544H436M503 544H523" class="m"/>
          <path d="M419 530V510H523V530" class="lg"/>
          <path d="M419 527V542H523V527" class="ly"/>
          <path d="M417 518H523M417 523H523M417 529H523" class="lc"/>
          <path d="M466 510V540M471 510V540M476 510V540M481 510V540M487 510V540M491 510V540" class="r"/>
          <text x="412" y="497" class="ts ts-d">上部筋</text><text x="436" y="497" class="ts-g ts-dg">SBJ</text>
          <text x="428" y="537" class="ts ts-d">侧面筋</text><text x="455" y="537" class="ts-g ts-dg">CGJ</text>
          <text x="492" y="537" class="ts ts-d">拉筋</text><text x="505" y="537" class="ts-g ts-dg">GJ</text>
          <text x="532" y="548" class="ts-g ts-dg">FPJ</text>
          <text transform="translate(414 530) rotate(-90)" class="ts-g ts-dg">XWJ</text>
          <text transform="translate(532 520) rotate(-60)" class="ts ts-d">弯折长度</text>
        </svg>
      </div>
    </div>
    <div class="vscroll">
      <svg class="vs-a" viewBox="0 0 10 6"><path d="M1 5l4-4 4 4" fill="none" stroke="#666" stroke-width="1.800"/></svg>
      <i class="vs-thumb"></i>
      <svg class="vs-a vs-end" viewBox="0 0 10 6"><path d="M1 1l4 4 4-4" fill="none" stroke="#666" stroke-width="1.800"/></svg>
    </div>
  </div>
  <div class="dlg-foot">
    <button class="btn btn-blue">确定</button>
    <button class="btn">取消</button>
  </div>
</div>
</body>
</html>
```
FILE: styles.css
```css
* { box-sizing: border-box; }
html, body { margin: 0; padding: 0; }
body {
  width: 1366px; height: 768px; overflow: hidden; position: relative;
  font: 12px/1 "Noto Sans CJK SC", "Liberation Sans", sans-serif; color: #111; background: #fff;
}
.defs { position: absolute; }
svg { display: block; flex: none; overflow: hidden; }
i { display: block; font-style: normal; }
.m { font-family: "Liberation Mono", monospace; font-size: 10px; }
.ico16 { width: 16px; height: 16px; flex: none; }
.ico12 { width: 12px; height: 12px; }

.app { width: 1366px; height: 768px; display: flex; flex-direction: column; }

.titlebar { height: 23px; background: #fff; display: flex; align-items: center; padding-left: 3px; gap: 4px; color: #7d7d7d; flex: none; }
.title-text { font-size: 12.750px; white-space: nowrap; }
.win-btns { margin-left: auto; display: flex; align-items: center; gap: 35px; padding-right: 19px; }
.wb-min { width: 11px; height: 1px; background: #8a8a8a; }
.wb { width: 11px; height: 11px; }
.wb-max { margin-left: 5px; }

.menubar { height: 30px; background: #f0f0f0; display: flex; align-items: center; padding-left: 7px; gap: 10.600px; flex: none; white-space: nowrap; }
.menu-ti { display: flex; align-items: center; gap: 6px; }
.menu-doc { margin-left: -3px; }
.menu-doc .caret { margin-left: -1px; }
.ico-doc { width: 14px; height: 17px; }
.menu-bot { margin-left: -3px; gap: 4px; }
.menu-tip { width: 186px; height: 28px; background: linear-gradient(#fff, #f2f2f2); border-radius: 4px; color: #0d6a6a; display: flex; align-items: center; padding-left: 29px; margin-left: -4px; font-size: 12px; }
.menu-user { margin-left: -4px; gap: 4px; }
.phone { letter-spacing: .35px; }
.menu-user .caret { margin-left: 2px; }
.ico-user { width: 16px; height: 18px; }
.menu-bean { margin-left: -2px; }
.ico-bell { width: 13px; height: 18px; margin-left: -1px; }
.more { font: 700 13px/1 "DejaVu Sans", sans-serif; color: #222; }
.more-end { margin-left: auto; padding-right: 3px; position: relative; bottom: 4px; }
.caret { width: 0; height: 0; border: 3px solid transparent; border-top: 3px solid #333; border-bottom: 0; margin-left: 5px; flex: none; }
.caret-near { margin-left: 2px; }

.toolbar { height: 31px; display: flex; background: #f0f0f0; flex: none; padding-top: 1px; }
.tb-seg { height: 29px; display: flex; align-items: center; background: linear-gradient(#fff, #efefef); border-radius: 4px; gap: 8px; white-space: nowrap; }
.seg-a { width: 148px; padding-left: 4px; gap: 6px; margin-right: 2px; }
.seg-a .caret { margin-left: -1px; }
.seg-a .more { margin-left: 12px; position: relative; bottom: 4px; }
.seg-b { width: 550px; padding-left: 8px; }
.seg-c { flex: 1; margin-left: 2px; padding-left: 4px; }
.seg-c .sep { margin: 0 -2px; }
.seg-c .ti .caret { margin-left: 3px; }
.seg-c .ti .caret-near { margin-left: 2px; }
.ti { display: flex; align-items: center; gap: 3px; white-space: nowrap; }
.off { color: #8c8c8c; }
.sep { width: 1px; height: 22px; background: #bdbdbd; flex: none; }
.sigma { font: 700 13px/16px "DejaVu Sans", sans-serif; text-align: center; color: #111; }
.combo { width: 62px; height: 22px; border: 1px solid #6f6f6f; display: flex; align-items: center; padding-left: 3px; gap: 3px; margin-right: -4px; }
.combo .caret { margin-left: 10px; }
.swatch { width: 14px; height: 13px; background: #e4e4e4; border: 1px solid #c8c8c8; }

.workspace { flex: 1; display: flex; min-height: 0; background: #f0f0f0; }

.nav { width: 172px; display: flex; flex-direction: column; padding: 0 7px 3px 0; flex: none; }
.nav-head { height: 15px; flex: none; display: flex; align-items: center; font-size: 12.600px; background: #eee; border-top: 1px solid #aaa; }
.nav-pin { margin-left: auto; width: 8px; height: 12px; }
.nav-x { margin: 0 5px 0 13px; width: 8px; height: 8px; }
.nav-tools { height: 73px; flex: none; background: #f5f5f5; display: flex; align-items: flex-end; border-left: 3px solid #e5e5e5; }
.nav-plus { height: 27px; width: 15px; font: 700 17px/27px "DejaVu Sans", sans-serif; color: #0b5f5f; background: #efefef; border-bottom: 1px solid #ccc; text-align: center; padding-left: 3px; }
.nav-list { flex: 1; min-height: 0; margin-left: 3px; border-left: 1px solid #bbb; display: flex; flex-direction: column; justify-content: flex-end; padding: 0 0 4px 44px; position: relative; overflow: hidden; background: linear-gradient(#f7f7f7, #f7f7f7) 0 0 / 11px 100% no-repeat, #fff; }
.nav-list::before { content: ""; position: absolute; left: 11px; top: 400px; bottom: 0; border-left: 1px dotted #777; }
.nav-list::after { content: ""; position: absolute; left: 31px; top: 400px; bottom: 0; border-left: 1px dotted #777; }
.nav-item { display: flex; align-items: center; height: 16px; gap: 3px; position: relative; }
.nav-item::before { content: ""; position: absolute; left: -12px; top: 8px; width: 10px; border-top: 1px dotted #777; }
.nav-cur { background: #cfcfcf; width: 77px; margin-left: -4px; padding-left: 4px; }
.ico-beam { width: 15px; height: 16px; }
.nav-chev { position: absolute; right: 7px; bottom: 6px; width: 10px; height: 6px; }
.mark { position: absolute; left: 7px; width: 5px; height: 2px; background: #777; transform: rotate(40deg); }
.mark-a { top: 105px; }
.mark-b { top: 153px; }
.nav-hscroll { height: 17px; margin-left: 3px; flex: none; background: #f0f0f0; display: flex; align-items: center; border-bottom: 1px solid #aaa; }
.hs-arrow { width: 6px; height: 10px; margin: 0 6px; }
.hs-thumb { width: 102px; height: 15px; background: #cdcdcd; margin: 0 10px 0 0; }
.nav-btn { height: 21px; flex: none; margin-top: 1px; background: #f0f0f0; border: 1px solid #c4c4c4; text-align: center; line-height: 19px; }

.content { flex: 1; min-width: 0; display: flex; flex-direction: column; }
.rowbar { height: 28px; flex: none; display: flex; align-items: center; gap: 7px; padding-left: 4px; background: linear-gradient(#fff, #efefef); border-radius: 4px 0 0 4px; white-space: nowrap; }
.rowbar .caret { margin-left: -2px; margin-right: 3px; }
.sep-a { margin: 0 -4px 0 1px; }
.sep-b { margin-right: -6px; }
.sep-c { margin-left: -3px; }
.sep-d { margin-left: -4px; }
.floorsel { width: 60px; background: #ececec; height: 22px; margin-left: -1px; justify-content: space-between; padding-right: 1px; }
.az { font: 700 11px "Liberation Sans", sans-serif; color: #3a5db0; text-decoration: underline; width: 10px; text-align: center; }
.ico-arrow { width: 10px; height: 12px; }
.rowbar .off { gap: 7px; }
.rowbar .off + .off { margin-left: 3px; }
.content-body { flex: 1; min-height: 0; display: flex; }
.tree { width: 180px; flex: none; background: #fff; border: 1px solid #bdbdbd; border-width: 0 1px 1px 1px; display: flex; margin-bottom: 3px; }
.tree-rows { flex: 1; display: flex; flex-direction: column; justify-content: flex-end; padding: 0 0 14px 24px; }
.tr { display: flex; align-items: center; height: 16px; gap: 7px; font-size: 12px; position: relative; }
.tr-chev { width: 10px; height: 6px; margin-right: 1px; }
.tr-c { padding-left: 37px; gap: 9px; }
.tr-c::before { content: ""; position: absolute; left: 26px; top: -6px; width: 8px; height: 14px; border-left: 1px dotted #777; border-bottom: 1px dotted #777; }
.tr-v::after { content: ""; position: absolute; left: 6px; top: -4px; height: 24px; border-left: 1px dotted #777; }
.tr-sel { background: #3366bb; color: #fff; margin-left: 34px; padding-left: 3px; width: 93px; }
.tr-sel::before { left: -8px; }
.tr-sel::after { left: -28px; }
.tree-scroll { width: 16px; background: #cdcdcd; position: relative; }
.nav-chev-s { position: absolute; left: 3px; bottom: 5px; width: 10px; height: 6px; }
.tree-scroll i { position: absolute; left: 0; right: 0; bottom: 0; height: 16px; background: #f0f0f0; }

.canvas-wrap { flex: 1; display: flex; flex-direction: column; padding: 0 4px 3px 1px; background: #fff; border-left: 8px solid #f0f0f0; }
.tab-strip { height: 21px; flex: none; border-bottom: 2px solid #ddd; margin-right: -4px; }
.canvas { flex: 1; margin-top: 3px; border: 1px solid #a8a8a8; background: #fff; }

.status { height: 22px; flex: none; display: flex; background: #f0f0f0; gap: 2px; }
.st { background: #fafafa; border: 1px solid #dcdcdc; height: 21px; display: flex; align-items: center; padding-left: 2px; white-space: nowrap; }
.st1 { width: 148px; } .st2 { width: 78px; } .st3 { width: 98px; } .st4 { width: 48px; } .st5 { width: 914px; } .st6 { flex: 1; }

.taskbar { height: 40px; flex: none; display: flex; background: #0a1a20; color: #fff; }
.tk-start { width: 48px; background: #000; display: flex; align-items: center; justify-content: center; }
.tk-win { width: 16px; height: 16px; }
.tk-search { width: 344px; background: #f2f2f2; color: #222; display: flex; align-items: center; padding-left: 10px; font-size: 14px; }
.cortana { width: 20px; height: 20px; border: 3px solid #111; border-radius: 50%; margin-right: 10px; flex: none; }
.tk-mic { width: 11px; height: 18px; margin-left: auto; margin-right: 15px; }
.tk-apps { width: 438px; display: flex; align-items: center; padding-left: 16px; }
.tk-ico { width: 24px; height: 24px; }
.tk-view { width: 16px; height: 16px; }
.tk-fan { margin-left: 30px; }
.tk-ie { margin-left: 28px; }
.tk-swirl { margin-left: 29px; position: relative; display: block; width: 24px; height: 24px; }
.tk-bellbadge { position: absolute; left: 13px; top: -4px; width: 14px; height: 16px; }
.tk-sep { width: 2px; height: 20px; background: #33444a; margin-left: 16px; flex: none; }
.tk-slot { height: 40px; display: flex; align-items: center; justify-content: center; }
.tk-big { width: 24px; height: 24px; }
.tk-act { width: 41px; margin-left: 19px; border-bottom: 3px solid #76b9ed; padding-top: 2px; }
.tk-act2 { width: 38px; margin-left: 9px; border-bottom: 3px solid #76b9ed; padding-top: 2px; }
.tk-scroll { width: 17px; background: #dfe2e3; display: flex; flex-direction: column; align-items: center; justify-content: space-around; padding: 4px 0; }
.tk-scroll svg { width: 9px; height: 6px; }
.tk-tray { flex: 1; display: flex; align-items: center; position: relative; }
.tk-sep2 { margin-left: 11px; height: 22px; width: 3px; }
.tk-link { margin-left: 11px; color: #ccc; }
.tk-people { width: 16px; height: 18px; margin-left: 25px; }
.tk-cpu { display: flex; flex-direction: column; align-items: center; gap: 6px; width: 50px; margin-left: 30px; }
.tk-t { width: 14px; height: 16px; margin-left: 11px; }
.tk-up { margin-left: 17px; height: 10px; }
.tk-wide { width: 17px; height: 14px; margin-left: 8px; }
.tk-vol { margin-left: 7px; }
.tk-kb { width: 23px; height: 15px; margin-left: 10px; }
.tk-ime { margin-left: 9px; font-size: 13px; }
.tk-sogou { width: 14px; height: 16px; margin-left: 16px; background: #e8401c; border-radius: 3px; font: 700 13px/16px "Liberation Sans", sans-serif; text-align: center; transform: rotate(-8deg); }
.tk-clock { display: flex; flex-direction: column; align-items: center; gap: 7px; width: 54px; margin-left: 20px; }
.tk-notify { position: absolute; left: 471px; top: 13px; display: block; width: 16px; height: 16px; }
.tk-notify svg { width: 16px; height: 16px; }
.tk-notify b { position: absolute; left: 6px; top: 7px; width: 17px; height: 17px; border-radius: 50%; background: #333; border: 1px solid #888; font: 700 11px/15px "Liberation Sans", sans-serif; text-align: center; }

.badge { position: absolute; left: 464px; top: -19px; width: 42px; height: 42px; border-radius: 50%; background: linear-gradient(#3db53d, #4cc94c); box-shadow: 0 1px 2px #888, inset 0 -1px 0 #bfe8bf; display: flex; align-items: flex-end; justify-content: center; color: #fff; font: 12px/1 "Liberation Sans", sans-serif; padding-bottom: 8px; }

.dlg-back { position: absolute; left: 490px; top: 115px; width: 758px; height: 546px; background: #d7e4f2; border: 1px solid #555; border-width: 1px 1px 2px 1px; box-shadow: -6px 0 10px rgba(0,0,0,.1); display: flex; flex-direction: column; }
.back-band { height: 30px; flex: none; background: linear-gradient(#bccbd9, #d7e4f2); }
.back-panel { width: 743px; margin-left: 7px; background: #efefef; display: flex; flex-direction: column; height: 506px; border-right: 1px solid #999; border-bottom: 1px solid #999; }
.back-radio { height: 34px; flex: none; display: flex; align-items: center; border-bottom: 1px solid #a0a0a0; position: relative; }
.rd-left { position: absolute; left: 128px; }
.rd-right { position: absolute; left: 417px; display: flex; align-items: center; gap: 3px; }
.radio { width: 13px; height: 13px; border: 1px solid #333; border-radius: 50%; background: #fff; }
.cad { flex: none; background: #000; }
.back-foot { flex: 1; display: flex; justify-content: flex-end; align-items: flex-start; padding: 12px 26px 0 0; }
.btn { width: 89px; height: 24px; font: 12px/1 "Noto Sans CJK SC", sans-serif; color: #111; background: #e1e1e1; border: 1px solid #adadad; padding: 0; }
.btn-blue { border: 2px solid #0f6cc0; }
.btn-rebar { width: 72px; height: 23px; }

.cad text, .cell text { font-family: "Noto Sans CJK SC", sans-serif; }
.w { fill: none; stroke: #fff; stroke-width: 1; shape-rendering: crispEdges; }
.r { fill: none; stroke: #f00; stroke-width: 2; shape-rendering: crispEdges; }
.r.big { stroke-width: 3; }
path.m { fill: none; stroke: #f0f; stroke-width: 2; shape-rendering: crispEdges; }
.lg { fill: none; stroke: #0f0; stroke-width: 2; shape-rendering: crispEdges; }
.ly { fill: none; stroke: #ff0; stroke-width: 2; shape-rendering: crispEdges; }
.lc { fill: none; stroke: #0ff; stroke-width: 2; shape-rendering: crispEdges; }
.ds { fill: none; stroke: #ff0; stroke-width: 1; stroke-dasharray: 1.500 6; shape-rendering: crispEdges; }
.dh { fill: none; stroke: #ff0; stroke-width: 1; stroke-dasharray: 3 8; shape-rendering: crispEdges; }
.dv { fill: none; stroke: #ff0; stroke-width: 3; stroke-dasharray: 1 10; shape-rendering: crispEdges; }
.dots-m { fill: none; stroke: #f0f; stroke-width: 3; stroke-linecap: square; }
.tw { font-size: 10.500px; fill: #dfe6ee; }
.cell .tg, .cell .ts-g, .cad .big-g, .cad .big-g12, .cad .big-g13 { font-family: "Liberation Mono", monospace; fill: #0f0; }
.tg { font-size: 10px; fill: #0f0; }
.ts { font-size: 9px; fill: #e4e8ee; }
.ts-g { font-size: 9px; }
.cell .ts-d { fill: #99a; }
.cell .ts-dg { fill: #0a0; }
.ttl { font-size: 18.700px; fill: #d6dbe2; }
.ttl-b { font-size: 20.800px; fill: #e8ebef; }
.cell .ttl-n { font-family: "Liberation Serif", serif; font-size: 20px; }
.big-w { font-size: 12.700px; fill: #fff; }
.big-g { font-size: 13px; }
.big-g12 { font-size: 12.500px; }
.big-g13 { font-size: 12px; }
.cad .big-num { font-family: "Liberation Serif", serif; font-size: 30px; fill: #fff; }
.big-t { font-size: 31px; fill: #f0f0f0; }
.big-t2 { font-size: 31.400px; }
.cad .big-n { font-family: "Liberation Serif", serif; }

.dlg { position: absolute; left: 14px; top: 98px; width: 637px; height: 503px; background: #f0f0f0; border: 1px solid #2e8fe8; display: flex; flex-direction: column; box-shadow: 0 0 8px rgba(0,0,0,.25); }
.dlg-title { height: 28px; flex: none; background: #fff; display: flex; align-items: center; padding-left: 8px; gap: 5px; }
.dlg-ctrl { margin-left: auto; display: flex; align-items: center; gap: 35px; padding-right: 17px; }
.dlg-ctrl svg { width: 11px; height: 11px; }
.dc-min { width: 11px; height: 1px; background: #aaa; }
.dlg-body { height: 425px; flex: none; display: flex; }
.thumbs { width: 618px; overflow: hidden; padding-left: 4px; }
.grid { display: grid; grid-template-columns: 302px 302px; gap: 5px; margin-top: -59px; }
.cell { width: 302px; height: 205px; background: #000; box-shadow: 0 1px 0 #a8a8a8; }
.cell-sel { outline: 4px solid #f00; outline-offset: -4px; }
.vscroll { flex: 1; display: flex; flex-direction: column; align-items: center; padding-top: 5px; }
.vs-a { width: 10px; height: 6px; }
.vs-thumb { width: 15px; height: 196px; background: #cdcdcd; margin-top: 39px; }
.vs-end { margin-top: auto; margin-bottom: 6px; }
.dlg-foot { flex: 1; background: #f0f0f0; border-top: 1px solid #a0a0a0; display: flex; justify-content: flex-end; align-items: flex-start; padding: 12px 34px 0 0; gap: 15px; }
```
